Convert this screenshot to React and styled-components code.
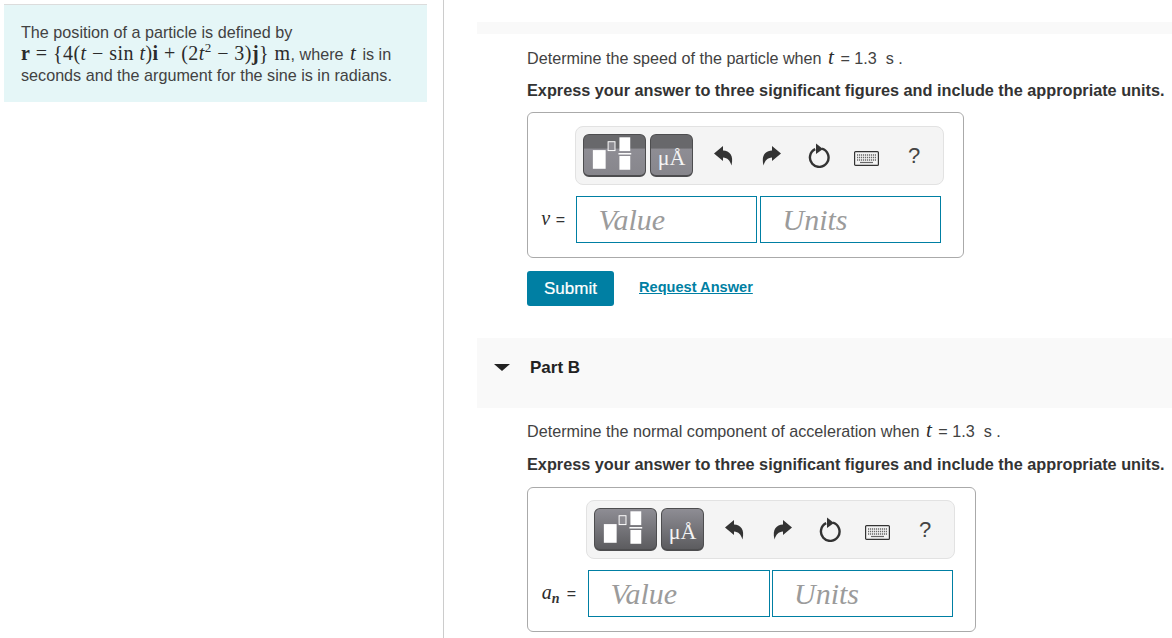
import React from "react";
import styled, { createGlobalStyle } from "styled-components";

const Global = createGlobalStyle`
  html, body { margin: 0; padding: 0; height: 100%; overflow: hidden; background: #fff; }
  body { font-family: "Liberation Sans", Arial, sans-serif; font-size: 16px; color: #333; }
  #root { height: 100%; }
`;

const Page = styled.div`
  display: flex;
  height: 638px;
  width: 1172px;
  overflow: hidden;
`;
const LeftColumn = styled.aside`
  box-sizing: border-box;
  width: 444px;
  flex: none;
  padding: 4px 16px 0 4px;
  border-right: 1px solid #ccc;
`;
const ProblemCard = styled.div`
  box-sizing: border-box;
  height: 98px;
  padding: 17px 17px 0;
  background: #e5f6f7;
  border-top: 1px solid #dcdcdc;
  font-size: 16.17px;
  line-height: 21.5px;
  color: #424242;
  white-space: nowrap;
`;
const Formula = styled.span`
  font-family: "Liberation Serif", "Times New Roman", serif;
  font-size: 20px;
  line-height: 0;
  color: #2b2b2b;
  letter-spacing: 0.45px;
`;
const MathVar = styled.i`
  font-family: "Liberation Serif", "Times New Roman", serif;
  font-size: ${(p) => p.$size || 21}px;
  line-height: 0;
  padding: 0 ${(p) => p.$pad ?? 2}px;
  color: #2b2b2b;
`;
const Superscript = styled.sup`
  font-size: 13px;
  line-height: 0;
`;
const RightColumn = styled.main`
  flex: 1;
  min-width: 0;
  padding: 22px 0 0 33px;
`;
const PartBand = styled.div`
  box-sizing: border-box;
  height: 12px;
  background: #f9f9f9;
`;
const PartHeader = styled.div`
  box-sizing: border-box;
  height: 70px;
  margin-top: 32px;
  background: #f9f9f9;
  display: flex;
  align-items: flex-start;
  padding: 19px 0 0 17px;
  line-height: 20px;
`;
const Caret = styled.span`
  width: 0;
  height: 0;
  margin: 7px 20px 0 0;
  border-left: 8px solid transparent;
  border-right: 8px solid transparent;
  border-top: 7px solid #222;
`;
const PartTitle = styled.h2`
  margin: 1px 0 0;
  font-size: 17px;
  line-height: 20px;
  font-weight: 700;
  color: #222;
`;
const Section = styled.section`
  padding: ${(p) => p.$top}px 0 0 50px;
`;
const Question = styled.p`
  margin: 0;
  font-size: 16.17px;
  line-height: 24px;
  color: #424242;
  white-space: nowrap;
`;
const Instruction = styled.p`
  margin: ${(p) => p.$gap}px 0 0;
  font-size: 16.25px;
  line-height: 24px;
  font-weight: 700;
  color: #333;
  white-space: nowrap;
`;
const AnswerBox = styled.div`
  box-sizing: border-box;
  width: ${(p) => p.$width}px;
  margin-top: ${(p) => p.$gap}px;
  padding: ${(p) => p.$top}px 0 14px;
  border: 1px solid #aaa;
  border-radius: 6px;
  display: grid;
  grid-template-columns: ${(p) => p.$labelWidth}px auto;
  justify-content: start;
  row-gap: 11px;
  align-items: center;
`;
const Toolbar = styled.div`
  box-sizing: border-box;
  grid-column: 2;
  width: 369px;
  height: 59px;
  padding: 7px 0 0 7px;
  display: flex;
  align-items: flex-start;
  background: #f4f4f4;
  border: 1px solid #e2e2e2;
  border-radius: 8px;
`;
const PaletteButton = styled.div`
  box-sizing: border-box;
  width: ${(p) => p.$width}px;
  height: 43px;
  margin-right: 4px;
  flex: none;
  display: flex;
  align-items: center;
  justify-content: center;
  border-radius: 6px;
  border: 1px solid #4d4d4f;
  border-bottom-width: 2px;
  background: ${(p) =>
    p.$split
      ? "linear-gradient(#68686b 0, #68686b 32%, #8e8d94 36%, #87868c 100%)"
      : "linear-gradient(#8e8d94 0, #5c5c5f 100%)"};
`;
const UnitGlyph = styled.span`
  font-family: "Liberation Serif", "Times New Roman", serif;
  font-size: 22px;
  line-height: 24px;
  margin-top: 6px;
  color: #f4f4f4;
`;
const IconSlots = styled.div`
  display: grid;
  grid-template-columns: repeat(5, 47.6px);
  height: 43px;
  margin-left: 3px;
  align-items: center;
  justify-items: center;
`;
const KeyboardSlot = styled.span`
  display: flex;
  margin-top: 6px;
`;
const HelpMark = styled.span`
  font-size: 22px;
  line-height: 24px;
  color: #444;
`;
const VarLabel = styled.label`
  justify-self: end;
  padding-right: 10px;
  font-size: 16px;
  color: #333;
  white-space: nowrap;
`;
const Sub = styled.sub`
  font-family: "Liberation Serif", "Times New Roman", serif;
  font-style: italic;
  font-size: 14px;
  line-height: 0;
  font-weight: 700;
  margin-right: 7px;
`;
const Fields = styled.div`
  display: flex;
  gap: ${(p) => p.$gap}px;
  margin-left: ${(p) => p.$offset}px;
`;
const FieldBox = styled.div`
  box-sizing: border-box;
  width: ${(p) => p.$width}px;
  height: 47px;
  padding: 0 0 0 21.5px;
  display: flex;
  align-items: center;
  border: 1px solid #007fa3;
  font-family: "Liberation Serif", "Times New Roman", serif;
  font-style: italic;
  font-size: 30px;
  color: #9b9b9b;
`;
const Actions = styled.div`
  display: flex;
  align-items: center;
  gap: 25px;
  margin-top: 13px;
`;
const SubmitButton = styled.button`
  width: 87px;
  height: 35px;
  padding: 0;
  border: 0;
  border-radius: 3px;
  background: #007fa3;
  color: #fff;
  font-family: "Liberation Sans", Arial, sans-serif;
  font-size: 17px;
  -webkit-text-stroke: 0.2px #fff;
`;
const RequestLink = styled.a`
  color: #007fa3;
  font-size: 14.6px;
  line-height: 17px;
  padding-bottom: 2px;
  font-weight: 700;
  text-decoration: underline;
`;

const MatrixIcon = () => (
  <svg width="62" height="41" viewBox="0 0 62 41">
    <rect x="9" y="15" width="13" height="19" fill="#fff" />
    <rect x="24.5" y="6.5" width="7" height="9" fill="#8d8c92" stroke="#fff" />
    <rect x="36" y="2" width="11" height="14" fill="#fff" />
    <rect x="35" y="18" width="13" height="1.5" fill="#fff" />
    <rect x="36" y="21" width="11" height="14" fill="#fff" />
  </svg>
);
const UndoIcon = () => (
  <svg width="22" height="22" viewBox="0 0 22 22">
    <path d="M1 8.500 10 1v4.500c6.500.5 11 4.500 8.500 15-1.500-5-4-7.800-8.500-8V16z" fill="#333" />
  </svg>
);
const RedoIcon = () => (
  <svg width="22" height="22" viewBox="0 0 22 22">
    <path d="M21 8.500 12 1v4.500C5.500 6 1 10 3.500 20.500c1.500-5 4-7.800 8.500-8V16z" fill="#333" />
  </svg>
);
const ReloadIcon = () => (
  <svg width="24" height="25" viewBox="0 0 24 25" fill="none">
    <path d="M8.200 6.200a9.300 9.300 0 1 0 6.800-.5" stroke="#333" strokeWidth="2.400" />
    <path d="M9 .5v10.500l7-5z" fill="#333" />
  </svg>
);
const KeyboardIcon = () => (
  <svg width="25" height="15" viewBox="0 0 25 15" fill="none">
    <rect x=".6" y=".6" width="23.800" height="13.800" rx="1" stroke="#333" strokeWidth="1.200" />
    <path d="M3 4h19M3 6.500h19M3 9h19" stroke="#666" strokeWidth="1.300" strokeDasharray="1.200 .8" />
    <path d="M6 11.500h13" stroke="#666" strokeWidth="1.200" />
  </svg>
);

const EditorToolbar = ({ split }) => (
  <Toolbar>
    <PaletteButton $width={63} $split={split}><MatrixIcon /></PaletteButton>
    <PaletteButton $width={43} $split={split}><UnitGlyph>μÅ</UnitGlyph></PaletteButton>
    <IconSlots>
      <UndoIcon />
      <RedoIcon />
      <ReloadIcon />
      <KeyboardSlot><KeyboardIcon /></KeyboardSlot>
      <HelpMark>?</HelpMark>
    </IconSlots>
  </Toolbar>
);

const Answer = ({ width, labelWidth, gap, top, fieldGap, fieldWidth, offset, split, label }) => (
  <AnswerBox $width={width} $labelWidth={labelWidth} $gap={gap} $top={top}>
    <EditorToolbar split={split} />
    <VarLabel>{label}</VarLabel>
    <Fields $gap={fieldGap} $offset={offset}>
      <FieldBox $width={fieldWidth}>Value</FieldBox>
      <FieldBox $width={fieldWidth}>Units</FieldBox>
    </Fields>
  </AnswerBox>
);

export default function App() {
  return (
    <Page>
      <Global />
      <LeftColumn>
        <ProblemCard>
          The position of a particle is defined by
          <br />
          <Formula>
            <b>r</b> = {"{"}4(<i>t</i> − sin <i>t</i>)<b>i</b> + (2<i>t</i>
            <Superscript>2</Superscript> − 3)<b>j</b>{"}"} m
          </Formula>
          , where <MathVar>t</MathVar> is in
          <br />
          seconds and the argument for the sine is in radians.
        </ProblemCard>
      </LeftColumn>
      <RightColumn>
        <PartBand />
        <Section $top={12}>
          <Question>
            Determine the speed of the particle when <MathVar>t</MathVar> = 1.3 &nbsp;s .
          </Question>
          <Instruction $gap={8}>
            Express your answer to three significant figures and include the appropriate units.
          </Instruction>
          <Answer
            width={437}
            labelWidth={47}
            gap={10}
            top={13}
            fieldGap={3}
            fieldWidth={181}
            offset={1}
            split
            label={<><MathVar $size={20} $pad={1}>v</MathVar>&nbsp;=</>}
          />
          <Actions>
            <SubmitButton>Submit</SubmitButton>
            <RequestLink href="#">Request Answer</RequestLink>
          </Actions>
        </Section>
        <PartHeader>
          <Caret />
          <PartTitle>Part B</PartTitle>
        </PartHeader>
        <Section $top={11}>
          <Question>
            Determine the normal component of acceleration when <MathVar>t</MathVar> = 1.3 &nbsp;s .
          </Question>
          <Instruction $gap={9}>
            Express your answer to three significant figures and include the appropriate units.
          </Instruction>
          <Answer
            width={449}
            labelWidth={58}
            gap={11}
            top={12}
            fieldGap={2}
            fieldWidth={181.5}
            offset={2}
            label={<><MathVar $size={20} $pad={0}>a</MathVar><Sub>n</Sub>=</>}
          />
        </Section>
      </RightColumn>
    </Page>
  );
}
